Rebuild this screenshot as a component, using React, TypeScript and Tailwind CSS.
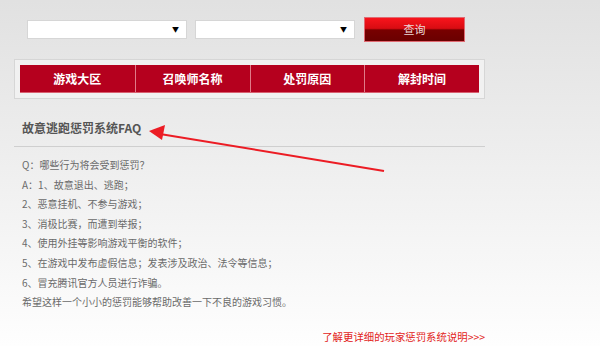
import React from 'react';

const headers = ['游戏大区', '召唤师名称', '处罚原因', '解封时间'];

const lines = [
  'Q：哪些行为将会受到惩罚？',
  'A：1、故意退出、逃跑；',
  '2、恶意挂机、不参与游戏；',
  '3、消极比赛，而遭到举报；',
  '4、使用外挂等影响游戏平衡的软件；',
  '5、在游戏中发布虚假信息；发表涉及政治、法令等信息；',
  '6、冒充腾讯官方人员进行诈骗。',
  '希望这样一个小小的惩罚能够帮助改善一下不良的游戏习惯。',
];

const Select: React.FC = () => (
  <div className="w-[160px] h-[19px] bg-white border border-[#d6d6d6] flex items-center justify-end pr-[7px]">
    <span className="text-[7px] text-black leading-none">▼</span>
  </div>
);

const App: React.FC = () => {
  return (
    <div
      className="relative w-[600px] h-[346px] overflow-hidden bg-gradient-to-b from-[#e1e1e1] to-[#fefefe]"
      style={{ fontFamily: '"Noto Sans CJK SC", "Liberation Sans", sans-serif' }}
    >
      <div className="flex items-center pt-[17px] pl-[27px] h-[42px]">
        <Select />
        <div className="ml-[8px]">
          <Select />
        </div>
        <button className="ml-[9px] w-[101px] h-[25px] border border-[#e06a72] bg-[linear-gradient(to_bottom,#f8141c_0%,#d80c12_45%,#780000_52%,#6a0000_100%)] text-[11px] text-[#ecdada] leading-none">
          查询
        </button>
      </div>

      <div className="ml-[14px] mt-[17px] w-[471px] h-[40px] border border-[#d6d6d6] bg-[#f1f1f1] p-[5px]">
        <div className="grid grid-cols-4 h-[28px] bg-[#b5001e] border-b border-[#d86070]">
          {headers.map((h, i) => (
            <div
              key={h}
              className={`flex items-center justify-center text-white text-[12px] font-bold ${i > 0 ? 'border-l border-[#e07a88]' : ''}`}
            >
              {h}
            </div>
          ))}
        </div>
      </div>

      <div className="ml-[14px] w-[471px] mt-[19px]">
        <div className="pl-[8px] h-[20px] leading-[20px] text-[12px] font-bold text-[#555]">故意逃跑惩罚系统FAQ</div>
        <div className="mt-[8px] border-t border-[#cfcfcf]" />
        <div className="pl-[8px] pt-[8px] text-[10px] leading-[19.6px] text-[#6a6a6a]">
          {lines.map((l) => (
            <div key={l}>{l}</div>
          ))}
        </div>
        <div className="mt-[15px] text-right text-[10.4px] leading-[19.6px] text-[#e2231a]">了解更详细的玩家惩罚系统说明&gt;&gt;&gt;</div>
      </div>

      <svg className="absolute left-0 top-0 pointer-events-none" width="600" height="346">
        <line x1="384" y1="171" x2="160" y2="134" stroke="#ec1c24" strokeWidth="2" />
        <polygon points="149,131 165,125 162,140" fill="#ec1c24" />
      </svg>
    </div>
  );
};

export default App;
